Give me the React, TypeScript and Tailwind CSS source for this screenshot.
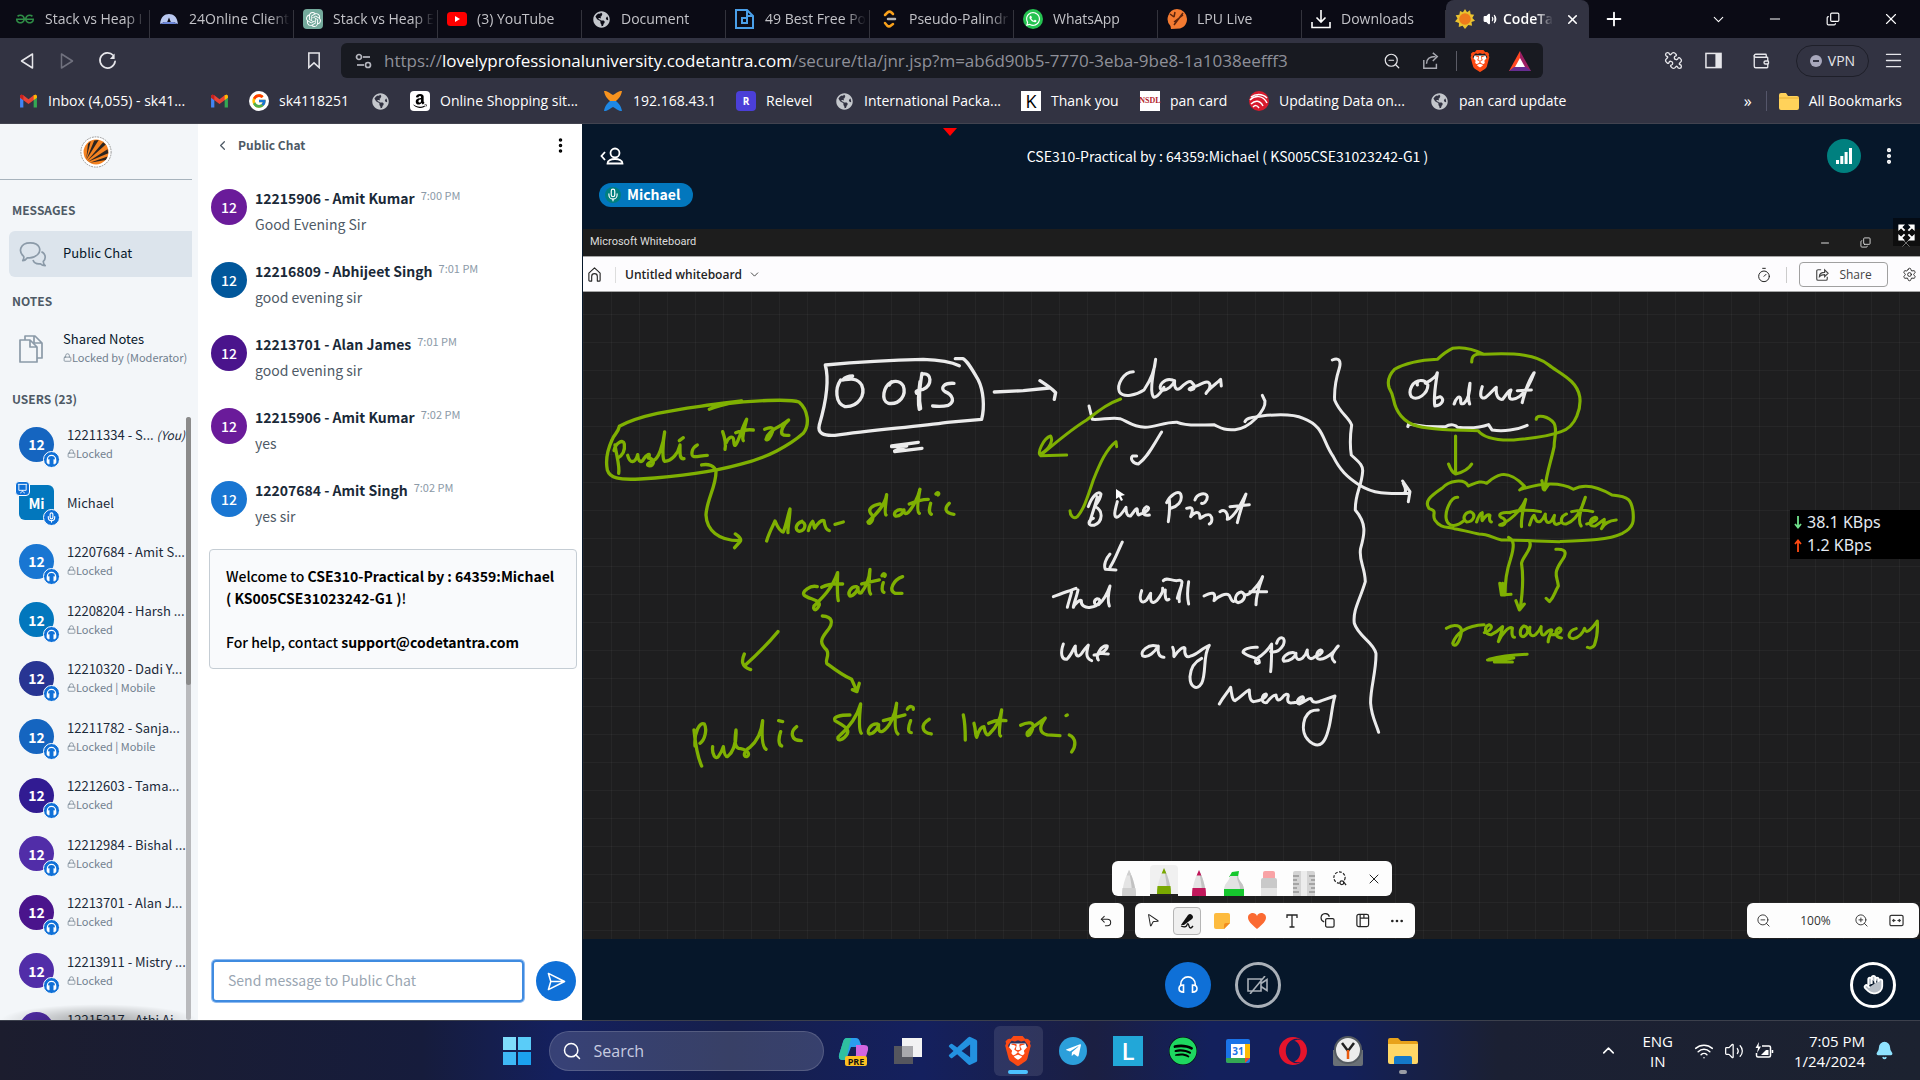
import React from "react";
import {
  ArrowDownToLine, BatteryCharging, Bell, Bookmark, ChevronDown, ChevronLeft, ChevronUp, Copy as Restore, Ellipsis,
  EllipsisVertical, Hand, Headphones, House, Lock, Menu, Mic, Minus, MousePointer2, PanelRight, PanelsTopLeft, Plus,
  Puzzle, Search, Settings, Timer, Type, Undo2, Volume2, Wallet, Wifi, X, ZoomIn, ZoomOut,
} from "lucide-react";
import { FcGoogle } from "react-icons/fc";
import { FaAmazon, FaGlobeAmericas, FaTelegramPlane, FaWhatsapp, FaSpotify } from "react-icons/fa";
import { SiBrave, SiGeeksforgeeks, SiOpenai, SiOpera } from "react-icons/si";
import { BiLogoVisualStudio } from "react-icons/bi";

/* ---------- small logos ---------- */

function Gmail() {
  return (
    <svg viewBox="0 0 20 16" className="h-[15px] w-[19px]">
      <path d="M1 3v11.5h3.5V6z" fill="#4285f4" />
      <path d="M19 3v11.5h-3.5V6z" fill="#34a853" />
      <path d="M1 2.6C1 .6 3.2.4 4.5 1.4L10 5.6l5.5-4.2C16.8.4 19 .6 19 2.6v1.3L10 10.6 1 3.9z" fill="#ea4335" />
      <path d="M15.5 1.4C16.8.4 19 .6 19 2.6v1.3l-3.5 2.6z" fill="#fbbc04" />
      <path d="M1 2.6v1.3l3.5 2.6V1.4C3.2.4 1 .6 1 2.6z" fill="#c5221f" />
    </svg>
  );
}

function BraveLogo({ size }: { size: number }) {
  return (
    <span className="relative inline-flex">
      <svg viewBox="0 0 24 24" width={size} height={size} className="absolute">
        <path d="M6 6h12l1.500 4-2.500 7-5 4-5-4-2.500-7z" fill="#fff" />
      </svg>
      <SiBrave size={size} color="#fb4a14" className="relative" />
    </span>
  );
}

function Globe() {
  return <FaGlobeAmericas size={17} className="text-[#c4c7cc]" />;
}

function YouTube() {
  return (
    <svg viewBox="0 0 20 14" className="h-3.5 w-5">
      <rect width="20" height="14" rx="3.5" fill="#f00" />
      <path d="M8 4v6l5-3z" fill="#fff" />
    </svg>
  );
}

function LpuBall({ size }: { size: number }) {
  return (
    <svg viewBox="0 0 36 36" width={size} height={size}>
      <circle cx="18" cy="18" r="17" fill="#fff" stroke="#8b8b8b" strokeWidth="1" strokeDasharray="2 1" />
      <circle cx="18" cy="18" r="14" fill="#f58220" />
      <g fill="#2b2420">
        <path d="M7 26 9 9l3-3z" />
        <path d="m7 27 9-22 5-.6z" />
        <path d="M8 28 26 7l3 2.500z" />
        <path d="m9 29 22-14 .8 4.500z" />
        <path d="m11 30 20-7-2 4z" />
      </g>
    </svg>
  );
}

function Sun() {
  return (
    <svg viewBox="0 0 24 24" className="size-5">
      <path d="M12 0l2.500 4L18 1.500l.8 4.700 4.200.6-2.200 4L24 14l-4.200 1.700.7 4.300-4.500-.7L12 24l-3-4-4.500 1.500.3-4.700L0 15l3-3.500L.8 7.500l4.400-.7.8-4.500L9.500 4z" fill="#e9c22f" />
      <circle cx="12" cy="12" r="7" fill="#ee7b1c" />
    </svg>
  );
}

/* ---------- browser chrome ---------- */

const tabs: { icon: React.ReactNode; title: string }[] = [
  { icon: <SiGeeksforgeeks size={18} color="#2f8d46" />, title: "Stack vs Heap I" },
  {
    icon: (
      <svg viewBox="0 0 20 12" className="w-[18px]">
        <path d="M0 11C1 3 5 0 10 0s9 3 10 11l-5-2h-3L10 4 8 9H5z" fill="#b9c8f0" />
        <path d="M0 11l5-2h10l5 2v1H0z" fill="#6c86d8" />
      </svg>
    ),
    title: "24Online Client",
  },
  {
    icon: (
      <span className="flex size-5 items-center justify-center rounded-sm bg-[#74aa9c]">
        <SiOpenai size={15} color="#fff" />
      </span>
    ),
    title: "Stack vs Heap E",
  },
  { icon: <YouTube />, title: "(3) YouTube" },
  { icon: <Globe />, title: "Document" },
  {
    icon: (
      <svg viewBox="0 0 20 20" className="size-5" fill="none" stroke="#4a9fe8" strokeWidth="2">
        <path d="M12 1H1v18h17V7z" />
        <path d="M12 1v6h6M7 9h5v5H7z" />
      </svg>
    ),
    title: "49 Best Free Po",
  },
  {
    icon: (
      <svg viewBox="0 0 20 20" className="size-5" fill="none" strokeWidth="2.500" strokeLinecap="round">
        <path d="M14 5l-1.500-1.500a3 3 0 0 0-4 0L6 6" stroke="#f9a11b" />
        <path d="M6 14l2 2.500a3 3 0 0 0 4 0l2-1.500" stroke="#f9a11b" />
        <path d="M9 10h7" stroke="#b5b5b5" />
      </svg>
    ),
    title: "Pseudo-Palindr",
  },
  {
    icon: (
      <span className="flex size-5 items-center justify-center rounded-full bg-[#25c351]">
        <FaWhatsapp size={16} color="#fff" />
      </span>
    ),
    title: "WhatsApp",
  },
  {
    icon: (
      <svg viewBox="0 0 20 20" className="size-5">
        <path d="M10 0a10 10 0 0 1 10 10c0 4-2 8-7 9.500L4 20l-.5-3A10 10 0 0 1 10 0z" fill="#f37a31" />
        <path d="M3 5l4 3M8 3l-1 5M7 16L16 4M7 13l9-7" stroke="#5c230c" strokeWidth="1.500" />
      </svg>
    ),
    title: "LPU Live",
  },
  {
    icon: (
      <svg viewBox="0 0 20 20" className="size-5" fill="none" stroke="#fff" strokeWidth="1.600">
        <path d="M10 1v12M5.500 8.500L10 13l4.500-4.500M1 13v5.500h18V13" />
      </svg>
    ),
    title: "Downloads",
  },
];

function TabStrip() {
  return (
    <div className="flex h-[38px] shrink-0 items-stretch bg-[#0b0b15] pl-1.5 text-sm text-[#c3c3c8]">
      {tabs.map((t) => (
        <button key={t.title} className="relative flex w-36 shrink items-center gap-2.5 overflow-hidden pr-1 pl-[9px]">
          <span className="flex w-5 shrink-0 justify-center">{t.icon}</span>
          <span className="min-w-0 flex-1 overflow-hidden text-left whitespace-nowrap [mask-image:linear-gradient(to_right,black_80%,transparent)]">
            {t.title}
          </span>
          <span className="absolute right-0 bottom-0 h-7 w-px bg-[#33333c]" />
        </button>
      ))}
      <div className="flex w-[143px] shrink-0 items-center rounded-t-lg bg-[#323342] pl-[9px] text-white">
        <Sun />
        <Volume2 size={14} fill="currentColor" className="ml-2" />
        <span className="ml-1.5 w-[50px] overflow-hidden font-semibold whitespace-nowrap [mask-image:linear-gradient(to_right,black_65%,transparent)]">
          CodeTa
        </span>
        <button aria-label="Close tab" className="ml-3"><X size={15} strokeWidth={2.5} /></button>
      </div>
      <button aria-label="New tab" className="ml-3.5 text-white"><Plus size={22} /></button>
      <div className="ml-auto flex items-center text-white">
        <button aria-label="Search tabs" className="flex w-14 justify-center"><ChevronDown size={17} strokeWidth={1.5} /></button>
        <button aria-label="Minimize" className="flex w-[58px] justify-center"><Minus size={16} strokeWidth={1.5} /></button>
        <button aria-label="Restore" className="flex w-[58px] justify-center"><Restore size={14} strokeWidth={2} className="-scale-x-100 rotate-180" /></button>
        <button aria-label="Close" className="flex w-[58px] justify-center"><X size={18} strokeWidth={1.5} /></button>
      </div>
    </div>
  );
}

function AddressRow() {
  return (
    <div className="flex h-[45px] shrink-0 items-center bg-[#323342] text-[#e6e6ea]">
      <div className="flex w-[341px] items-center px-[7px]">
        <button aria-label="Back" className="flex w-10 justify-center">
          <svg viewBox="0 0 14 18" className="h-[18px] w-3.5" fill="none" stroke="currentColor" strokeWidth="1.500" strokeLinejoin="round"><path d="M12.500 2v14L1.500 9z" /></svg>
        </button>
        <button aria-label="Forward" className="flex w-10 justify-center text-[#70717e]">
          <svg viewBox="0 0 14 18" className="h-[18px] w-3.5" fill="none" stroke="currentColor" strokeWidth="1.500" strokeLinejoin="round"><path d="M1.500 2v14l11-7z" /></svg>
        </button>
        <button aria-label="Reload" className="flex w-10 justify-center">
          <svg viewBox="0 0 20 20" className="size-[19px]" fill="none" stroke="currentColor" strokeWidth="1.800" strokeLinecap="round"><path d="M16 4.500A8 8 0 1 0 18 11" /><path d="M17.500 2.500v6h-5z" fill="currentColor" stroke="none" /></svg>
        </button>
        <button aria-label="Bookmark" className="ml-auto flex w-10 justify-center">
          <svg viewBox="0 0 14 18" className="h-[17px] w-3.5" fill="none" stroke="currentColor" strokeWidth="1.600"><path d="M1.500 1h11v15.500L7 11.500l-5.500 5z" /></svg>
        </button>
      </div>
      <div className="flex h-[35px] min-w-0 flex-1 items-center rounded-md bg-[#181a21] pr-1.5 pl-3.5">
        <svg viewBox="0 0 18 16" className="h-4 w-[18px]" fill="none" stroke="#b7b8c0" strokeWidth="1.700">
          <circle cx="4" cy="4" r="2.500" /><path d="M8 4h7" /><circle cx="13" cy="12" r="2.500" /><path d="M2 12h7" />
        </svg>
        <div role="textbox" aria-label="Address" className="ml-[11px] min-w-0 flex-1 truncate text-[17px] text-[#8f9099]">
          https://<span className="text-white">lovelyprofessionaluniversity.codetantra.com</span>/secure/tla/jnr.jsp?m=ab6d90b5-7770-3eba-9be8-1a1038eefff3
        </div>
        <button aria-label="Zoom level" className="flex w-[39px] justify-center"><ZoomOut size={18} strokeWidth={1.6} /></button>
        <button aria-label="Share page" className="flex w-[39px] justify-center">
          <svg viewBox="0 0 20 20" className="size-[18px]" fill="none" stroke="#a9aab2" strokeWidth="1.600"><path d="M2 9v9h14v-5M5 13c0-6 4-8 10-8M12 1l5 4-5 5" /></svg>
        </button>
        <span className="ml-1.5 h-5 w-px bg-[#5b5c66]" />
        <button aria-label="Brave Shields" className="flex w-[46px] justify-center"><BraveLogo size={22} /></button>
        <button aria-label="Brave Rewards" className="flex w-[34px] justify-center">
          <svg viewBox="0 0 22 20" className="h-5 w-[22px]"><path d="M11 0L0 20h5l6-11z" fill="#ff4724" /><path d="M11 0l11 20h-5l-6-11z" fill="#9e1f63" /><path d="M0 20h22l-5-4H5z" fill="#662d91" /><path d="M11 7l5 9H6z" fill="#fff" /></svg>
        </button>
      </div>
      <div className="flex w-[377px] items-center justify-end pr-[7px]">
        <button aria-label="Extensions" className="flex w-10 justify-center"><Puzzle size={19} strokeWidth={1.7} className="-scale-x-100" /></button>
        <button aria-label="Sidebar" className="flex w-10 justify-center">
          <svg viewBox="0 0 18 18" className="size-[17px]"><rect x="1" y="1.500" width="16" height="15" fill="none" stroke="#e6e6ea" strokeWidth="1.600" /><path d="M11 1.500h6v15h-6z" fill="#e6e6ea" /></svg>
        </button>
        <button aria-label="Wallet" className="ml-2 flex w-10 justify-center"><Wallet size={18} strokeWidth={1.8} /></button>
        <button className="ml-[15px] flex h-8 w-[73px] items-center justify-center gap-1 rounded-full border border-[#1e1f29] text-sm">
          <span className="mr-0.5 flex size-3 items-center justify-center rounded-full bg-[#a8a8bc]"><span className="h-0.5 w-1.5 bg-[#323342]" /></span>VPN
        </button>
        <button aria-label="Menu" className="ml-1 flex w-10 justify-center"><Menu size={21} strokeWidth={1.5} /></button>
      </div>
    </div>
  );
}

const bookmarks: { icon: React.ReactNode; label: string; width: string }[] = [
  { icon: <Gmail />, label: "Inbox (4,055) - sk41...", width: "w-[191px]" },
  { icon: <Gmail />, label: "", width: "w-10" },
  { icon: <span className="rounded-full bg-white p-0.5"><FcGoogle size={16} /></span>, label: "sk4118251", width: "w-[121px]" },
  { icon: <Globe />, label: "", width: "w-10" },
  { icon: <span className="rounded-sm bg-white p-0.5 text-black"><FaAmazon size={16} /></span>, label: "Online Shopping sit...", width: "w-[193px]" },
  {
    icon: (
      <svg viewBox="0 0 20 20" className="size-5"><path d="M1 0c4 0 5 2 9 4 4-2 5-4 9-4-1 6-4 8-6 10H7C5 8 2 6 1 0z" fill="#f7931e" /><path d="M7 10h6c2 2 5 4 6 10-4 0-5-2-9-4-4 2-5 4-9 4 1-6 4-8 6-10z" fill="#1e88e5" /></svg>
    ),
    label: "192.168.43.1",
    width: "w-[133px]",
  },
  { icon: <span className="flex size-5 items-center justify-center rounded bg-[#4b3fd8] text-[10px] font-bold text-white">R</span>, label: "Relevel", width: "w-[98px]" },
  { icon: <Globe />, label: "International Packa...", width: "w-[187px]" },
  { icon: <span className="flex size-5 items-center justify-center bg-white text-lg leading-none text-black">K</span>, label: "Thank you", width: "w-[119px]" },
  { icon: <span className="flex size-5 items-center justify-center bg-white font-['Liberation_Serif'] text-[8px] font-bold text-[#b3262e]">NSDL</span>, label: "pan card", width: "w-[109px]" },
  {
    icon: (
      <svg viewBox="0 0 20 20" className="size-5" fill="none"><circle cx="10" cy="10" r="10" fill="#d71b2d" /><path d="M1 9c5-5 13-5 17 3M2 13c4-4 9-4 12 2M4 16c2-2 4-2 6 1M2 6c4-3 11-4 16 1" stroke="#fff" strokeWidth="1.500" /></svg>
    ),
    label: "Updating Data on...",
    width: "w-[180px]",
  },
  { icon: <Globe />, label: "pan card update", width: "w-[140px]" },
];

function BookmarksBar() {
  return (
    <div className="flex h-[41px] shrink-0 items-center border-b border-[#42434f] bg-[#323342] pb-1 pl-[18px] text-sm text-white">
      {bookmarks.map((b, i) => (
        <a key={i} href="#" aria-label={b.label || "Bookmark"} className={`flex items-center gap-2.5 whitespace-nowrap ${b.width}`}>
          <span className="flex w-5 shrink-0 justify-center">{b.icon}</span>
          {b.label}
        </a>
      ))}
      <button className="ml-auto px-3.5 text-base">»</button>
      <span className="h-5 w-px bg-[#55566a]" />
      <a href="#" className="ml-3 flex items-center gap-2.5 pr-[18px]">
        <svg viewBox="0 0 20 17" className="h-[17px] w-5"><path d="M0 2a2 2 0 0 1 2-2h5l2 3h9a2 2 0 0 1 2 2v10a2 2 0 0 1-2 2H2a2 2 0 0 1-2-2z" fill="#ffd25a" /><path d="M0 5h20" stroke="#e8b030" /></svg>
        All Bookmarks
      </a>
    </div>
  );
}

/* ---------- left panel ---------- */

type User = { name: string; color: string; status?: string; you?: boolean; presenter?: boolean };

const users: User[] = [
  { name: "12211334 - S...", color: "bg-[#1565c0]", status: "Locked", you: true },
  { name: "Michael", color: "bg-[#0277bd]", presenter: true },
  { name: "12207684 - Amit S...", color: "bg-[#1976d2]", status: "Locked" },
  { name: "12208204 - Harsh ...", color: "bg-[#0277bd]", status: "Locked" },
  { name: "12210320 - Dadi Y...", color: "bg-[#283593]", status: "Locked | Mobile" },
  { name: "12211782 - Sanja...", color: "bg-[#1565c0]", status: "Locked | Mobile" },
  { name: "12212603 - Tama...", color: "bg-[#311b92]", status: "Locked" },
  { name: "12212984 - Bishal ...", color: "bg-[#512da8]", status: "Locked" },
  { name: "12213701 - Alan J...", color: "bg-[#4a148c]", status: "Locked" },
  { name: "12213911 - Mistry ...", color: "bg-[#512da8]", status: "Locked" },
  { name: "12215217 - Athi Ai...", color: "bg-[#512da8]", status: "Locked" },
];

function BadgePhones() {
  return (
    <svg viewBox="0 0 12 12" className="size-[11px]" fill="none" stroke="#fff" strokeWidth="1.400">
      <path d="M1.500 8V6a4.500 4.500 0 0 1 9 0v2" />
      <path d="M3.500 6v5C1.500 11 1 9.500 1 8.500S1.500 6 3.500 6zM8.500 6v5c2 0 2.500-1.500 2.500-2.500S10.500 6 8.500 6z" fill="#fff" strokeWidth=".6" />
    </svg>
  );
}

function UserRow({ user }: { user: User }) {
  return (
    <li className="flex shrink-0 items-center odd:h-[58px] even:h-[59px]">
      <div className={`relative ml-[19px] flex size-[35px] shrink-0 items-center justify-center text-sm font-bold text-white ${user.color} ${user.presenter ? "rounded-md" : "rounded-full"}`}>
        {user.presenter ? "Mi" : "12"}
        {user.presenter && (
          <span className="absolute -top-1 -left-1 flex size-[15px] items-center justify-center rounded border border-white bg-[#0f70d7]">
            <svg viewBox="0 0 12 12" className="size-[11px]" fill="none" stroke="#fff"><path d="M1 1.500h10M2 2v6h8V2M6 8v1M3.500 11L6 9l2.500 2" /></svg>
          </span>
        )}
        <span className="absolute -right-1.5 -bottom-1.5 flex size-[17px] items-center justify-center rounded-full border border-white bg-[#0f70d7]">
          {user.presenter ? <Mic size={11} strokeWidth={2.5} /> : <BadgePhones />}
        </span>
      </div>
      <div className="ml-[13px] min-w-0 whitespace-nowrap">
        <div className="text-[13px] leading-[19px] text-[#1b2a3a]">
          {user.name} {user.you && <i className="text-[12px]">(You)</i>}
        </div>
        {user.status && (
          <div className="flex items-center text-[11px] leading-[19px] text-[#71808f]">
            <Lock size={9} strokeWidth={2} />
            {user.status}
          </div>
        )}
      </div>
    </li>
  );
}

function Sidebar() {
  return (
    <aside className="flex w-[198px] shrink-0 flex-col overflow-hidden bg-[#f3f6f9]">
      <div className="mr-1.5 flex h-14 shrink-0 items-center justify-center border-b border-[#a7b3bd]"><LpuBall size={32} /></div>
      <h2 className="mt-5 ml-3 text-[12px] leading-5 font-bold text-[#4e5a66]">MESSAGES</h2>
      <button className="mt-[11px] mr-1.5 ml-[9px] flex h-[46px] shrink-0 items-center rounded-l-md bg-[#dce4ec] text-left text-[13px] text-[#06172a]">
        <svg viewBox="0 0 30 28" className="ml-2.5 h-[27px] w-7" fill="none" stroke="#8b9aa8" strokeWidth="1.800" strokeLinejoin="round">
          <path d="M5 16C-1 11 1 1.500 12 1.500S24 10 20 14s-8 4-11 3.500C8 19 6 20.500 4 20.500c1-1.500 1.500-3 1-4.500z" />
          <path d="M24 11c5 2 5 8 2 10.500 0 2 1 3.500 2 4.500-2.500 0-4-1-5-2-4 .5-7-1-8-4" />
        </svg>
        <span className="ml-4 pb-0.5">Public Chat</span>
      </button>
      <h2 className="mt-3.5 ml-3 text-[12px] leading-5 font-bold text-[#4e5a66]">NOTES</h2>
      <button className="mt-[19px] flex shrink-0 items-center text-left">
        <svg viewBox="0 0 24 28" className="ml-[19px] h-7 w-6" fill="none" stroke="#8b9aa8" strokeWidth="1.700" strokeLinejoin="round">
          <path d="M6 5V1h10l7 7v15h-5M15 1v7h8" />
          <path d="M1 5h10l7 7v15H1zM11 5v7h7" />
        </svg>
        <span className="ml-5 text-[#06172a]">
          <span className="block text-[13px] leading-[18px]">Shared Notes</span>
          <span className="flex items-center text-[11px] leading-[19px] whitespace-nowrap text-[#71808f]"><Lock size={9} />Locked by (Moderator)</span>
        </span>
      </button>
      <h2 className="mt-[22px] ml-3 text-[12px] leading-5 font-bold text-[#4e5a66]">USERS (23)</h2>
      <div className="relative mt-1.5 min-h-0 flex-1 overflow-hidden">
        <ul className="flex flex-col">{users.map((u) => <UserRow key={u.name} user={u} />)}</ul>
        <div className="absolute inset-x-0 bottom-0 h-4 bg-[radial-gradient(ellipse_at_bottom,rgba(0,0,0,0.35),transparent_70%)]" />
        <div className="absolute top-0.5 right-[7px] bottom-0 w-[5px] rounded bg-[#b9babd]">
          <div className="h-[268px] rounded bg-[#8b8b8b]" />
        </div>
      </div>
    </aside>
  );
}

/* ---------- chat ---------- */

const messages = [
  { name: "12215906 - Amit Kumar", time: "7:00 PM", text: "Good Evening Sir", color: "bg-[#6a1b9a]" },
  { name: "12216809 - Abhijeet Singh", time: "7:01 PM", text: "good evening sir", color: "bg-[#01579b]" },
  { name: "12213701 - Alan James", time: "7:01 PM", text: "good evening sir", color: "bg-[#4a148c]" },
  { name: "12215906 - Amit Kumar", time: "7:02 PM", text: "yes", color: "bg-[#6a1b9a]" },
  { name: "12207684 - Amit Singh", time: "7:02 PM", text: "yes sir", color: "bg-[#1976d2]" },
];

function Chat() {
  return (
    <section className="flex w-96 shrink-0 flex-col bg-white">
      <header className="flex h-[42px] items-center pr-3 pl-[17px] text-[#4e5a66]">
        <button className="flex items-center gap-2 text-[12px] font-bold"><ChevronLeft size={15} />Public Chat</button>
        <button aria-label="Chat options" className="ml-auto text-black"><EllipsisVertical size={19} strokeWidth={2.5} /></button>
      </header>
      <ul className="mt-[17px]">
        {messages.map((m, i) => (
          <li key={i} className="flex h-[73px] items-start pl-[13px]">
            <span className={`mt-1.5 flex size-9 shrink-0 items-center justify-center rounded-full text-sm font-medium text-white ${m.color}`}>12</span>
            <div className="ml-2">
              <div className="flex text-sm leading-[30px] font-bold text-[#1a2938]">
                {m.name}
                <time className="ml-1.5 text-[11px] leading-[25px] font-normal text-[#8b9aa8]">{m.time}</time>
              </div>
              <p className="text-sm leading-[22px] text-[#4e5a66]">{m.text}</p>
            </div>
          </li>
        ))}
      </ul>
      <div className="mt-px mr-[5px] ml-[11px] rounded-sm border border-[#c5cdd4] bg-[#f9fafc] py-[15px] pl-4 text-sm leading-[22px] font-medium text-black">
        <p>Welcome to <b>CSE310-Practical by : 64359:Michael<br />( KS005CSE31023242-G1 )</b>!</p>
        <p className="mt-[22px]">For help, contact <b>support@codetantra.com</b></p>
      </div>
      <form className="mt-auto mb-[18px] flex items-center gap-3 pr-1.5 pl-3.5" onSubmit={(e) => e.preventDefault()}>
        <label htmlFor="message" className="sr-only">Send message to Public Chat</label>
        <input id="message" autoFocus placeholder="Send message to Public Chat" className="h-[42px] min-w-0 flex-1 rounded-sm border-2 border-[#3f8be0] px-3.5 pb-0.5 text-sm shadow-[0_0_0_1px_#8fbaf0] outline-none placeholder:text-[#9aa6b2]" />
        <button aria-label="Send message" className="flex size-10 items-center justify-center rounded-full bg-[#0f70d7] text-white">
          <svg viewBox="0 0 20 20" className="size-[19px]" fill="none" stroke="currentColor" strokeWidth="1.600" strokeLinejoin="round"><path d="M1.500 1.500l17 8.500-17 8.500L4 10zM4 10h14" /></svg>
        </button>
      </form>
    </section>
  );
}

/* ---------- whiteboard ---------- */

const greenLeft = [
  "M358 238C390 224 420 220 455 213C430 216 380 221 330 229C250 240 150 255 88 289C84 310 72 312 66 330C50 365 48 400 52 420C60 445 85 450 150 447C260 440 370 425 450 403C530 385 600 345 640 310C660 285 655 240 627 216C600 206 480 212 400 222",
  "M75 345C80 380 90 410 86 430M72 362C76 340 100 325 103 342C106 365 95 378 82 385",
  "M113 376C120 402 136 400 143 374C144 392 150 398 158 392C170 372 185 366 175 384C195 385 195 410 176 407C168 405 175 398 190 392C205 388 220 345 224 306C218 340 216 392 224 394C245 392 264 372 270 345C270 370 268 388 282 386",
  "M268 332l12-9M322 345C306 352 300 378 312 380C325 381 335 376 352 376",
  "M398 305C405 325 408 345 405 358M408 340C415 320 430 315 431 330C432 345 434 352 440 340C450 320 458 290 470 268C462 300 455 325 460 332M437 308C455 300 470 298 490 300",
  "M524 298C542 290 552 292 548 304C542 322 532 334 528 328C530 308 560 292 576 284C584 278 592 274 596 270C578 286 572 304 576 312C582 318 590 316 597 316",
  "M335 405C355 400 375 408 378 425C378 470 350 510 348 555C350 600 385 632 448 632M436 612C448 620 456 628 450 635L434 653",
  "M530 633C538 605 552 582 555 573C560 585 570 605 580 606C590 580 595 550 600 537C600 560 592 600 594 608",
  "M636 574C618 580 612 600 628 604C648 602 650 578 634 575M655 602C658 590 662 580 668 574C672 582 672 592 674 594C682 582 695 568 702 572C704 588 708 600 718 602M735 583l25-7",
  "M870 522C850 526 832 535 842 550C858 565 838 590 834 576C850 560 885 530 890 494C888 520 882 550 888 555M935 540C920 536 908 552 916 558C930 560 940 548 942 540C942 552 948 554 956 546C970 530 985 500 990 478C984 510 980 545 988 550M958 522C980 512 1000 508 1015 508M1022 520C1018 535 1015 548 1024 553M1038 492c5-8 12-2 6 3M1078 520C1062 535 1065 550 1092 553",
  "M682 770C660 764 636 785 642 795C655 808 690 808 688 825C680 845 668 842 672 828C690 810 725 780 743 728C742 760 742 800 745 812M695 772C715 762 735 760 758 762M800 770C782 768 772 790 780 798C792 798 804 780 804 772C804 785 806 792 814 788C828 770 838 745 840 718C838 750 834 785 842 792M815 762L868 750M880 758C875 770 875 785 882 787M876 737c5-10 14-4 8 2M938 740C910 750 895 780 915 790L936 790",
  "M697 858C725 860 735 875 710 905C690 930 690 940 710 960C720 975 705 990 710 1000C730 1015 755 1035 785 1048L800 1082M808 1060l-7 25-14-6",
  "M564 905C535 940 500 975 463 1008M463 972C455 990 452 1010 482 1019",
  "M312 1200C316 1240 322 1280 335 1308M315 1248C312 1205 330 1175 343 1182C352 1198 345 1230 330 1240M368 1250C365 1275 378 1290 385 1280C396 1265 400 1250 400 1250C402 1270 406 1280 412 1280C428 1268 440 1240 438 1200C432 1240 436 1256 452 1256C474 1260 482 1275 470 1280C458 1280 462 1262 480 1252C505 1230 515 1200 518 1172C515 1210 515 1250 528 1258M572 1205C565 1225 565 1245 575 1248M566 1172l12 3M620 1190C600 1205 602 1232 634 1232",
  "M780 1155C750 1155 728 1160 735 1172C755 1185 780 1195 772 1212C760 1232 740 1235 744 1222C775 1195 800 1165 812 1122C808 1160 806 1200 814 1210M862 1182C842 1180 828 1205 838 1212C852 1212 864 1195 866 1184C864 1200 868 1208 878 1204C900 1190 915 1155 920 1120C915 1160 912 1205 924 1212M880 1172L945 1155M962 1172C955 1190 952 1208 964 1208M952 1138c6-12 20-10 18 0M1018 1168C990 1185 995 1208 1024 1212",
  "M1120 1155C1126 1180 1126 1210 1126 1230M1152 1180C1158 1200 1156 1220 1160 1222C1166 1200 1175 1190 1182 1190C1185 1210 1192 1222 1200 1210C1220 1190 1232 1165 1235 1140C1230 1180 1225 1215 1232 1218M1196 1180C1215 1170 1235 1170 1248 1172",
  "M1292 1186C1315 1174 1336 1176 1328 1196C1320 1220 1308 1222 1312 1208C1326 1190 1352 1176 1366 1164C1346 1192 1348 1208 1372 1215L1410 1217M1428 1157l4-2M1438 1215C1460 1225 1458 1250 1445 1266",
];

const whiteLeft = [
  "M706 105C718 150 710 210 688 285C682 310 700 318 735 316C850 300 980 290 1072 277L1175 268C1185 230 1180 180 1165 150C1145 115 1130 90 1118 86L1096 86M706 105C800 96 900 90 1000 88C1055 90 1085 96 1108 107",
  "M752 150C735 175 735 220 765 230C805 232 828 195 815 165C800 140 775 148 758 150C765 142 775 138 788 138",
  "M905 155C880 170 872 210 895 220C930 225 950 195 940 168C930 150 905 150 898 165",
  "M990 155C985 190 984 220 988 238M996 130C990 170 985 200 992 236M1000 132C1025 128 1028 165 1000 178C985 182 975 180 980 190",
  "M1092 160C1060 158 1050 175 1065 185C1090 195 1095 215 1075 226C1060 230 1045 230 1028 228",
  "M905 348L985 337M914 365L996 355M905 350L950 348L914 363",
  "M1213 186L1300 182L1378 174M1350 152C1370 165 1390 180 1397 188L1393 208",
];

const whiteMid = [
  "M340 125C310 125 290 165 298 185C310 205 350 195 372 180C392 150 405 120 407 88C398 140 388 190 402 202C410 203 425 185 432 172M458 150C432 142 412 170 424 180C442 184 460 165 464 152C462 175 470 182 480 175C495 160 510 150 514 156C525 165 528 178 512 180C500 178 512 172 530 168C548 160 560 152 566 158C575 165 568 180 558 190C562 180 590 160 602 148L604 168",
  "M207 228L217 268C245 270 270 262 300 266C320 272 335 290 375 292C410 290 435 276 472 277C500 290 545 284 582 284C600 292 610 302 645 299C690 295 738 240 735 213L727 196",
  "M675 275C680 262 700 262 725 258C780 252 820 252 850 265C915 290 905 330 940 380C960 420 980 440 1018 465C1060 492 1100 492 1165 490M1150 460C1160 480 1158 490 1150 490M1148 453L1170 485L1165 515",
  "M425 306C400 345 385 380 355 402C340 402 328 385 338 378L350 378",
  "M232 500C225 530 215 555 210 575M205 530C215 500 235 480 243 492C240 515 220 530 225 530C250 540 250 575 222 586C200 588 205 570 220 565",
  "M292 515C285 540 280 560 290 562C300 560 310 545 318 532C318 550 322 560 332 558C345 540 352 530 352 540C352 555 355 558 362 552C385 545 392 532 380 530C370 535 360 560 388 555",
  "M448 508C450 530 448 555 445 575M440 518C450 495 475 480 482 492C490 515 470 530 452 535M500 535C520 528 520 540 512 560C525 545 540 540 540 565C550 560 560 550 570 555C580 565 575 580 568 582M525 510C530 490 560 485 562 500C562 515 550 522 545 520M600 545C615 535 625 550 622 568C635 565 655 540 678 492C665 530 655 565 652 578M630 530L688 524",
  "M307 636C295 660 285 690 270 712M270 672C258 685 250 705 256 718L288 720",
  "M100 800C125 790 150 782 168 775M155 785C150 805 145 820 142 832M174 780C170 800 160 825 160 832C165 820 180 808 184 812C182 826 195 835 212 832C240 828 246 806 232 806C218 812 222 828 236 824C250 812 262 790 270 768C265 790 262 812 268 828",
  "M365 782C355 810 365 825 380 810L392 790C390 815 395 825 410 812C425 795 430 785 428 775M436 780C434 800 437 815 447 808M430 752C440 742 448 750 470 752C500 745 480 770 472 805M485 765C480 785 475 800 478 815M506 755C502 780 502 805 506 822",
  "M552 798C575 785 590 785 582 812C595 798 618 788 628 796C634 808 636 816 642 814M664 786C646 790 640 812 654 818C672 816 680 796 668 788C676 798 686 796 696 784C710 770 722 755 728 740C715 775 708 805 708 824M690 785L740 785",
  "M130 942C120 970 125 990 140 988C155 975 160 955 166 948C165 975 172 988 185 970C195 955 205 945 205 945C200 965 195 985 215 992M222 975C240 975 262 960 262 948C245 945 225 975 235 990M240 970L265 972",
  "M410 948C385 940 360 965 368 978C385 985 405 965 415 948C412 970 418 982 432 982M458 952C465 965 460 980 462 980C475 960 490 948 495 955C492 975 500 985 512 978C530 975 545 955 568 946C548 975 560 1030 545 1060C530 1085 510 1070 510 1040C512 1010 525 995 545 985",
  "M712 952C690 950 665 960 670 968C690 985 720 980 718 998C710 1005 700 995 712 985C735 970 750 950 755 942C755 970 755 1000 752 1025M770 940C778 915 800 920 790 945C780 962 765 968 752 965M822 968C802 966 782 985 792 994C810 994 826 982 828 970C826 986 834 994 848 984C858 975 862 960 862 960C860 985 872 992 885 980M890 978C905 974 912 962 902 960C888 966 884 988 900 988C920 986 930 975 940 966C950 955 950 950 955 948C935 970 930 985 944 996",
  "M598 1122C610 1100 625 1085 632 1072C635 1095 638 1112 645 1112C665 1100 675 1085 688 1080C688 1100 690 1115 702 1115C725 1112 745 1098 738 1092C725 1095 720 1120 740 1118C750 1105 760 1095 768 1095C770 1110 775 1115 785 1105C795 1090 805 1090 805 1098C800 1115 805 1122 820 1118C838 1118 858 1108 848 1100C834 1102 826 1120 838 1122C855 1116 868 1102 874 1106C876 1118 890 1120 905 1112L945 1098C935 1130 935 1165 925 1200C915 1240 900 1252 880 1242C850 1225 845 1195 855 1165C865 1145 875 1140 895 1140",
  "M937 90C955 82 965 90 958 115C950 140 942 170 944 210C960 250 985 260 995 285C990 320 990 350 994 375C1015 395 1030 405 1028 425C1025 470 1005 490 1006 540C1040 580 1035 610 1022 655C1015 690 1035 710 1036 755C1020 810 998 840 1003 880C1015 920 1060 935 1068 970C1070 1020 1050 1080 1052 1120C1055 1160 1068 1180 1076 1207",
];

const greenMid = [
  "M302 207C265 220 240 240 200 270C150 300 100 345 62 375M140 375L62 377C50 370 70 325 92 318C100 330 90 355 65 370",
  "M290 350L288 335C260 355 240 400 220 450C200 510 190 540 172 560C160 570 150 555 150 542",
];

const whiteRight = [
  "M150 152C120 148 108 185 118 200C135 215 165 190 165 165C155 145 130 150 135 165M158 160C175 150 190 140 192 128C188 160 180 200 185 228C205 225 215 208 200 200L185 206M240 222C245 205 255 195 258 205C260 215 255 225 268 220C285 205 285 175 285 160C280 185 280 210 284 222M320 170C312 195 315 210 330 202C345 190 355 175 360 172C358 195 365 210 378 208C388 195 394 182 402 180C396 195 394 208 406 208C435 205 455 165 468 128C448 160 438 200 434 218M420 182L460 180",
  "M108 290L110 282C150 290 180 292 215 290C230 280 245 285 250 292C280 295 310 295 338 284L348 300C380 305 420 300 448 286",
];

const greenRight = [
  "M290 96C290 75 300 70 325 73C290 55 260 50 235 55C215 65 205 75 192 88C150 90 100 100 70 118C50 140 50 160 55 175C70 200 65 215 75 235C90 270 120 290 165 294C210 302 260 300 308 302C325 325 360 332 410 330C470 325 520 315 545 305C590 290 602 230 598 200C590 150 540 130 510 105C475 75 420 68 325 73",
  "M244 318L244 432M224 402C230 420 240 430 244 432C260 428 280 420 290 402",
  "M474 268C475 250 510 260 525 280C535 300 525 320 525 350C515 400 505 420 498 480M490 452C495 465 490 480 498 480L508 465",
  "M427 480L440 468C420 445 395 430 375 434C350 440 340 455 333 460C315 450 300 460 280 468C270 445 225 450 205 475C170 500 155 515 168 535C195 545 175 550 185 570C200 595 220 590 240 596C265 600 280 605 310 612C340 612 350 625 375 630C430 628 460 635 540 635C620 632 680 630 720 610C755 590 752 570 750 545C745 510 740 500 690 495C650 470 610 460 580 478C550 460 500 455 430 478",
  "M250 502C230 500 212 545 218 570C226 595 250 588 268 572M286 545C268 548 262 568 276 576C294 576 304 554 288 546M304 576C308 562 314 550 320 548C320 560 318 568 320 572C328 558 338 550 342 556C340 566 340 574 346 576M400 548C378 545 362 552 374 562C394 570 386 590 370 585C395 575 430 545 444 508C436 540 430 565 432 590M395 548C430 538 460 540 486 545M455 585C460 570 462 560 468 556C472 566 474 580 486 574C496 566 498 556 500 552C498 572 506 586 518 572L526 556C520 580 528 588 540 580M560 552C542 560 540 584 560 582C590 570 605 535 614 502C600 540 592 575 602 588M575 545C600 538 620 540 635 545M618 582C640 578 655 564 642 562C626 566 620 592 642 588C656 580 664 570 668 568C668 580 664 590 660 596C666 584 680 572 702 570",
  "M395 622C412 630 412 650 400 690C390 720 385 750 385 795M370 760L375 795L402 793M378 760L380 790",
  "M455 635C465 655 435 680 432 700C438 740 435 790 428 838M416 812L426 840L440 822",
  "M530 658C565 655 560 675 545 695C520 735 535 740 537 768C525 790 525 800 512 815L502 805",
  "M218 895C240 880 265 885 260 910C255 940 240 955 236 940C245 910 275 886 325 884M326 908C345 902 352 888 340 884C324 890 326 916 346 914C362 906 372 896 378 890C376 906 370 920 366 935C375 912 396 888 406 894C404 908 404 922 412 922M440 888C425 895 425 922 438 920C456 908 452 890 438 888M456 892C452 912 460 924 472 914C482 904 486 896 488 890C486 908 490 922 500 912C512 896 524 896 516 908C510 922 508 930 508 936M520 914C540 914 552 898 540 894C526 900 526 922 546 924M588 896C566 902 560 926 580 926C600 922 608 906 612 895C615 915 630 900 648 873C650 900 645 930 640 945C635 955 625 955 620 952",
  "M340 988C375 978 410 975 448 973M335 990C370 988 400 982 410 984C380 988 360 992 355 996L406 996",
];

const GREEN = "#7fb002";
const WHITE = "#ebebeb";

function Ink({ d, color, transform, width = 9 }: { d: string[]; color: string; transform: string; width?: number }) {
  return (
    <g transform={transform} stroke={color} strokeWidth={width}>
      {d.map((p, i) => <path key={i} d={p} />)}
    </g>
  );
}

function Drawing() {
  return (
    <svg viewBox="583 292 1337 647" className="block w-full" fill="none" strokeLinecap="round" strokeLinejoin="round" role="img" aria-label="Handwritten notes on OOPS, class and object">
      <Ink d={whiteLeft} color={WHITE} transform="translate(590 330) scale(.3333)" width={10} />
      <Ink d={whiteMid} color={WHITE} transform="translate(1020 330) scale(.3333)" />
      <Ink d={whiteRight} color={WHITE} transform="translate(1370 330) scale(.3507 .3333)" />
      <Ink d={greenLeft} color={GREEN} transform="translate(590 330) scale(.3333)" width={10} />
      <Ink d={greenMid} color={GREEN} transform="translate(1020 330) scale(.3333)" />
      <Ink d={greenRight} color={GREEN} transform="translate(1370 330) scale(.3507 .3333)" />
      <path d="M1116 489v10l3-2 2 4 2-1-2-4 4-1z" fill="#fff" />
    </svg>
  );
}

function Pen({ kind, color }: { kind: "pen" | "marker" | "eraser" | "ruler"; color: string }) {
  if (kind === "ruler")
    return (
      <svg viewBox="0 0 22 25" className="h-[25px] w-[22px]"><rect width="22" height="28" rx="2" fill="#d4d4d4" /><path d="M8 0h6v25H8z" fill="#ececec" /><path d="M0 5h6M0 9h4M0 13h6M0 17h4M0 21h6M22 5h-6M22 9h-4M22 13h-6M22 17h-4M22 21h-6" stroke="#777" /></svg>
    );
  if (kind === "eraser")
    return (
      <svg viewBox="0 0 18 25" className="h-[25px] w-[18px]"><rect x="3" width="12" height="9" rx="2" fill={color} /><path d="M1 9q0-2 2-2h12q2 0 2 2v16H1z" fill="#c9c9c9" /><path d="M1 17h16v8H1z" fill="#e4e4e4" /></svg>
    );
  if (kind === "marker")
    return (
      <svg viewBox="0 0 20 25" className="h-[25px] w-5"><path d="M5 6l3-5 7-1-1 6z" fill={color} /><path d="M6 5h8c1 6 5 6 6 13H0C1 11 5 11 6 5z" fill="#e2e2e2" /><path d="M13 5h1c1 6 5 6 6 13h-4c0-5-3-8-3-13z" fill="#c4c4c4" /><path d="M0 18h20v7H0z" fill={color} /></svg>
    );
  return (
    <svg viewBox="0 0 16 26" className="h-[26px] w-4">
      <path d="M8 0c3 7 6 12 7 26H1C2 12 5 7 8 0z" fill="#e4e4e4" />
      <path d="M8 0c3 7 6 12 7 26h-4C11 14 9 7 8 0z" fill="#c2c2c2" />
      <path d="M8 0l2.400 5.500H5.600zM1.500 18h13q.5 4 .5 8H1q0-4 .5-8z" fill={color} />
    </svg>
  );
}

const toolBtn = "flex h-full w-[35px] items-center justify-center";

function BoardToolbars() {
  return (
    <>
      <div className="absolute inset-x-0 bottom-px flex flex-col items-center gap-[7px] text-[#242424]">
        <div className="flex h-[35px] items-end overflow-hidden rounded-md bg-[#fdfdfd]">
          <button aria-label="Pen" className="flex w-[35px] justify-center"><Pen kind="pen" color="#cfcfcf" /></button>
          <button aria-label="Green pen" className="flex w-[35px] justify-center">
            <span className="flex h-[31px] w-7 items-end justify-center rounded-t border-b-2 border-[#222] bg-[#f0f0f0]"><Pen kind="pen" color="#79a800" /></span>
          </button>
          <button aria-label="Red pen" className="flex w-[35px] justify-center"><Pen kind="pen" color="#c2185b" /></button>
          <button aria-label="Highlighter" className="flex w-[35px] justify-center"><Pen kind="marker" color="#16c72e" /></button>
          <button aria-label="Eraser" className="flex w-[35px] justify-center"><Pen kind="eraser" color="#f9a3a6" /></button>
          <button aria-label="Ruler" className="flex w-[35px] justify-center"><Pen kind="ruler" color="#ddd" /></button>
          <button aria-label="Lasso select" className={toolBtn}>
            <svg viewBox="0 0 16 16" className="size-[15px]" fill="none" stroke="currentColor" strokeWidth="1.300"><circle cx="8" cy="7" r="6" strokeDasharray="3 1.500" /><circle cx="10.500" cy="12.500" r="2" fill="#fff" /><path d="M12 11l3 4" /></svg>
          </button>
          <button aria-label="Close pens" className={toolBtn}><X size={16} strokeWidth={1.5} /></button>
        </div>
        <div className="flex gap-[11px]">
          <button aria-label="Undo" className="flex size-[35px] items-center justify-center rounded-md bg-[#fdfdfd]"><Undo2 size={14} strokeWidth={1.8} /></button>
          <div className="flex h-[35px] items-center rounded-md bg-[#fdfdfd]">
            <button aria-label="Select" className={toolBtn}><MousePointer2 size={15} strokeWidth={1.6} className="rotate-12" /></button>
            <button aria-label="Ink" className={toolBtn}>
              <span className="flex size-7 items-center justify-center rounded border border-[#b5b5b5] bg-[#efefef]">
                <svg viewBox="0 0 16 16" className="size-4"><path d="M2 12L9 2q2-2 4 0t0 4L5 12z" fill="#111" /><path d="M2 13q5 2 6-1t2 1 4 0" fill="none" stroke="#111" strokeWidth="1.300" /></svg>
              </span>
            </button>
            <button aria-label="Sticky note" className={toolBtn}>
              <svg viewBox="0 0 16 16" className="size-4"><path d="M2 0h12q2 0 2 2v8l-6 6H2q-2 0-2-2V2q0-2 2-2z" fill="#fdbb3f" /><path d="M10 16v-4q0-2 2-2h4z" fill="#f28c1e" /></svg>
            </button>
            <button aria-label="Reactions" className={toolBtn}>
              <svg viewBox="0 0 18 16" className="h-4 w-[18px]"><path d="M9 16C3 11 0 8 0 4.500 0 0 7-2 9 3c2-5 9-3 9 1.500C18 8 15 11 9 16z" fill="#fb6a32" /></svg>
            </button>
            <button aria-label="Text" className={toolBtn}>
              <svg viewBox="0 0 14 14" className="size-3.5" fill="none" stroke="currentColor" strokeWidth="1.300"><path d="M2 4V1h10v3M7 1v12M4.500 13h5" /></svg>
            </button>
            <button aria-label="Shapes" className={toolBtn}>
              <svg viewBox="0 0 16 16" className="size-[15px]" fill="none" stroke="currentColor" strokeWidth="1.300"><path d="M4.500 9.500A4.500 4.500 0 1 1 10 4" /><rect x="6" y="6" width="9" height="9" rx="1.500" /></svg>
            </button>
            <button aria-label="Templates" className={toolBtn}>
              <svg viewBox="0 0 16 16" className="size-[15px]" fill="none" stroke="currentColor" strokeWidth="1.300"><rect x="2" y="1.500" width="12.500" height="13" rx="2" /><path d="M5.500 1.500v13M5.500 5.500h9M9.500 5.500V1.500" /></svg>
            </button>
            <button aria-label="More" className={toolBtn}><Ellipsis size={16} /></button>
          </div>
        </div>
      </div>
      <div className="absolute right-px bottom-px flex h-[35px] w-[172px] items-center justify-between rounded-md bg-[#fdfdfd] pr-[15px] pl-[9px] text-xs text-[#333]">
        <button aria-label="Zoom out"><ZoomOut size={15} strokeWidth={1.5} /></button>
        <span className="pl-1.5">100%</span>
        <div className="flex gap-5">
          <button aria-label="Zoom in"><ZoomIn size={15} strokeWidth={1.5} /></button>
          <button aria-label="Fit to screen">
            <svg viewBox="0 0 16 16" className="size-[15px]" fill="none" stroke="currentColor" strokeWidth="1.300"><rect x="1" y="2.500" width="14" height="11" rx="1.500" /><path d="M4 8h3M12 8H9M5.500 6.500L4 8l1.500 1.500M10.500 6.500L12 8l-1.500 1.500" /></svg>
          </button>
        </div>
      </div>
    </>
  );
}

function Whiteboard() {
  return (
    <div className="relative flex min-h-0 flex-1 flex-col overflow-hidden bg-[#1e1e1f] font-['Open_Sans',sans-serif]">
      <div className="flex h-[27px] shrink-0 items-center bg-[#1d1d1d] pl-[7px] font-['Roboto',sans-serif] text-[11px] text-[#dcdcdc]">
        Microsoft Whiteboard
        <div className="ml-auto flex items-center pr-2">
          <span className="flex w-[41px] justify-center"><Minus size={12} /></span>
          <span className="flex w-[41px] justify-center"><Restore size={11} className="-scale-x-100 rotate-180" /></span>
          <span className="flex w-[26px] justify-end"><X size={12} /></span>
        </div>
      </div>
      <div className="flex h-9 shrink-0 items-center border-y border-[#a5a5a5] bg-[#fdfcfe] pt-px text-[#242424]">
        <button aria-label="Home" className="ml-1">
          <svg viewBox="0 0 16 16" className="size-[15px]" fill="none" stroke="currentColor" strokeWidth="1.200" strokeLinejoin="round"><path d="M2 6.500L8 1l6 5.500V14q0 1-1 1h-2V10q0-3-3-3t-3 3v5H3q-1 0-1-1z" /></svg>
        </button>
        <span className="ml-[13px] h-4 w-px bg-[#ddd]" />
        <button className="ml-[9px] flex items-center gap-1.5 text-xs font-semibold">Untitled whiteboard<ChevronDown size={13} strokeWidth={1.5} /></button>
        <button aria-label="Timer" className="ml-auto"><Timer size={16} strokeWidth={1.5} /></button>
        <span className="ml-3.5 h-4 w-px bg-[#ccc]" />
        <button className="ml-3 flex h-[25px] w-[89px] items-center justify-center gap-2.5 rounded border border-[#a0a0a0] text-xs text-[#444]">
          <svg viewBox="0 0 16 16" className="size-3.5" fill="none" stroke="currentColor" strokeWidth="1.300"><path d="M7 2H3.500Q2 2 2 3.500v9Q2 14 3.500 14h9q1.500 0 1.500-1.500V10M5 10q0-5 6-5V2l4 4-4 4V7.500Q7 7.500 5 10z" /></svg>
          Share
        </button>
        <button aria-label="Settings" className="ml-3.5 pr-[3px]"><Settings size={15} strokeWidth={1.5} /></button>
      </div>
      <div className="relative min-h-0 flex-1 bg-[linear-gradient(to_right,rgba(255,255,255,0.035)_1px,transparent_1px),linear-gradient(to_bottom,rgba(255,255,255,0.035)_1px,transparent_1px)] bg-[size:28px_28px] bg-[position:0_22px]">
        <Drawing />
        <BoardToolbars />
      </div>
    </div>
  );
}

/* ---------- meeting area ---------- */

function Meeting() {
  return (
    <main className="relative flex min-w-0 flex-1 flex-col bg-[#06172a] pl-px text-white">
      <svg viewBox="0 0 14 8" className="absolute top-1 left-[361px] h-2 w-3.5"><path d="M0 0h14L7 8z" fill="red" /></svg>
      <header className="h-[105px] shrink-0">
        <div className="flex h-[59px] items-center pt-1">
          <button aria-label="Toggle user list" className="w-[58px] pl-[17px]">
            <svg viewBox="0 0 24 18" className="h-[18px] w-6" fill="none" stroke="currentColor" strokeWidth="1.800"><path d="M5 5L1.500 9 5 13" /><circle cx="15" cy="6" r="4.500" /><path d="M7.500 16.500c0-6 15-6 15 0z" /></svg>
          </button>
          <h1 className="min-w-0 flex-1 text-center text-sm">CSE310-Practical by : 64359:Michael ( KS005CSE31023242-G1 )</h1>
          <div className="flex w-[106px] items-center justify-end pr-[21px]">
            <button aria-label="Connection status" className="flex size-[34px] items-center justify-center rounded-full bg-[#00807f]">
              <svg viewBox="0 0 16 16" className="size-4" fill="#fff"><path d="M0 12h3v4H0zM4.300 8h3v8h-3zM8.600 4h3v12h-3zM13 0h3v16h-3z" /></svg>
            </button>
            <button aria-label="Options" className="ml-[18px]"><EllipsisVertical size={20} strokeWidth={3} /></button>
          </div>
        </div>
        <div className="ml-4 flex h-6 w-[94px] items-center gap-1.5 rounded-full bg-[#0277bd] pl-1.5 text-sm leading-none font-bold">
          <span className="flex size-4 items-center justify-center rounded-full bg-[#00807f]"><Mic size={14} /></span>
          <span className="pb-0.5">Michael</span>
        </div>
      </header>
      <Whiteboard />
      <button aria-label="Fullscreen" className="absolute top-[94px] right-0 flex h-7 w-[27px] items-center justify-center bg-black/50">
        <svg viewBox="0 0 18 18" className="size-[17px]" fill="#fff" stroke="#fff" strokeWidth="1.200"><path d="M1 1h5L1 6zM17 1v5l-5-5zM1 17v-5l5 5zM17 17h-5l5-5z" /><path d="M3 3l4 4M15 3l-4 4M3 15l4-4M15 15l-4-4" strokeWidth="2" /></svg>
      </button>
      <footer className="flex h-[81px] shrink-0 items-center pt-2.5 pr-6 pl-[13px]">
        <div className="flex flex-1 justify-center gap-6">
          <button aria-label="Leave audio" className="flex size-[46px] items-center justify-center rounded-full bg-[#0f70d7]">
            <svg viewBox="0 0 22 20" className="h-[18px] w-5" fill="none" stroke="#fff" strokeWidth="1.800"><path d="M3 11V9a8 8 0 0 1 16 0v2" /><path d="M6 10v8c-3 0-5-1-5-4s2-4 5-4zM16 10v8c3 0 5-1 5-4s-2-4-5-4z" /></svg>
          </button>
          <button aria-label="Share webcam" className="flex size-[46px] items-center justify-center rounded-full border-[3px] border-[#a9b0b8] text-[#a9b0b8]">
            <svg viewBox="0 0 22 18" className="h-[18px] w-[22px]" fill="none" stroke="currentColor" strokeWidth="1.600"><path d="M1 3h13v12H1zM14 7.500l6-4v11l-6-4M18 0L3 18" /></svg>
          </button>
        </div>
        <button aria-label="Raise hand" className="flex size-[46px] items-center justify-center rounded-full border-[3px] border-white"><Hand size={21} strokeWidth={2} fill="#b9c0c8" /></button>
      </footer>
      <div className="absolute top-[386px] right-0 h-[49px] w-[130px] bg-black pt-px pl-1 font-['Noto_Sans',sans-serif] text-base leading-[23px] text-[#e4e9f0]">
        <div className="flex items-center gap-[5px]">
          <svg viewBox="0 0 8 13" className="h-[13px] w-2" fill="none" stroke="#6fe08a" strokeWidth="1.800"><path d="M4 0v11M1 8l3 3.500L7 8" /></svg>38.1 KBps
        </div>
        <div className="flex items-center gap-[5px]">
          <svg viewBox="0 0 8 13" className="h-[13px] w-2" fill="none" stroke="#ff4a12" strokeWidth="1.800"><path d="M4 13V2M1 5l3-3.500L7 5" /></svg>1.2 KBps
        </div>
      </div>
    </main>
  );
}

/* ---------- taskbar ---------- */

function TaskIcon({ label, active, dot, children }: { label: string; active?: boolean; dot?: boolean; children: React.ReactNode }) {
  return (
    <button aria-label={label} className={`relative mx-[3px] flex h-[50px] w-[49px] items-center justify-center rounded-md ${active ? "bg-white/10" : ""}`}>
      {children}
      {active && <span className="absolute bottom-0.5 h-1 w-5 rounded-full bg-[#4cc2ff]" />}
      {dot && <span className="absolute bottom-0.5 h-1 w-2 rounded-full bg-[#9a9ca5]" />}
    </button>
  );
}

function Taskbar() {
  return (
    <nav className="grid h-[60px] shrink-0 grid-cols-[1fr_auto_1fr] items-center border-t border-[#3c404c] bg-[linear-gradient(to_right,#1c1d2e_0%,#161c3c_22%,#14205e_29%,#161f4c_38%,#14205e_48%,#1b1f42_57%,#13205c_63%,#13205a_70%,#1b2033_78%,#1c2230_100%)] text-white">
      <div />
      <div className="flex items-center">
        <button aria-label="Start" className="mr-[5px] flex w-[54px] justify-center">
          <span className="grid size-7 grid-cols-2 gap-0.5">
            <span className="bg-[#7fdcfb]" /><span className="bg-[#5accf8]" /><span className="bg-[#3fb8f5]" /><span className="bg-[#1ba1ef]" />
          </span>
        </button>
        <label className="mr-0.5 flex h-10 w-[275px] items-center gap-3 rounded-full border border-white/15 bg-white/15 pl-3">
          <Search size={20} strokeWidth={1.8} />
          <input aria-label="Search" placeholder="Search" className="w-40 bg-transparent text-base outline-none placeholder:text-[#c8cce0]" />
        </label>
        <TaskIcon label="Copilot">
          <svg viewBox="0 0 30 30" className="size-[30px]">
            <path d="M9 2h9q3 0 4 4l2 5H13l-5 13H5q-5 0-4-5L5 6q1-4 4-4z" fill="#2a9df0" />
            <path d="M9 2h4L8 24H5q-5 0-4-5L5 6q1-4 4-4z" fill="#2fc0a0" />
            <path d="M18 9h8q5 0 4 5l-3 10q-1 4-4 4h-9q4-3 4-10z" fill="#d265e0" />
            <rect x="7" y="20" width="22" height="10" rx="2" fill="#fdc022" />
            <text x="18" y="28.500" textAnchor="middle" fontSize="9" fontWeight="700" fill="#111" fontFamily="Open Sans">PRE</text>
          </svg>
        </TaskIcon>
        <TaskIcon label="Task view">
          <svg viewBox="0 0 28 28" className="size-7"><rect x="8" y="1" width="20" height="19" fill="#f3f3f3" /><rect x="0" y="9" width="19" height="18" fill="#55565e" /><path d="M8 9h11v11H8z" fill="#a9a9ac" /></svg>
        </TaskIcon>
        <TaskIcon label="Visual Studio Code"><BiLogoVisualStudio size={34} color="#2391e0" /></TaskIcon>
        <TaskIcon label="Brave" active><BraveLogo size={30} /></TaskIcon>
        <TaskIcon label="Telegram"><span className="flex size-7 items-center justify-center rounded-full bg-[#2c9fdb]"><FaTelegramPlane size={17} /></span></TaskIcon>
        <TaskIcon label="LightShot"><span className="flex size-[30px] items-center justify-center bg-[#22a7d8] text-2xl leading-none font-semibold">L</span></TaskIcon>
        <TaskIcon label="Spotify"><span className="rounded-full bg-black"><FaSpotify size={28} color="#1ed760" /></span></TaskIcon>
        <TaskIcon label="Google Calendar">
          <svg viewBox="0 0 24 24" className="size-6"><rect width="24" height="24" rx="2" fill="#1a73e8" /><path d="M19 5h5v14h-5z" fill="#fbbc04" /><path d="M0 19h24l-5 5H2q-2 0-2-2z" fill="#34a853" /><path d="M19 19h5l-5 5z" fill="#ea4335" /><path d="M5 5h14v14H5z" fill="#fff" /><text x="12" y="16" textAnchor="middle" fontSize="10" fontWeight="700" fill="#1a73e8" fontFamily="Open Sans">31</text></svg>
        </TaskIcon>
        <TaskIcon label="Opera"><SiOpera size={28} color="#e5142b" /></TaskIcon>
        <TaskIcon label="Clock">
          <svg viewBox="0 0 30 30" className="size-[30px]"><path d="M0 14h30v14q0 2-2 2H2q-2 0-2-2z" fill="#6a7076" /><circle cx="15" cy="14" r="13" fill="#ececec" stroke="#555b61" strokeWidth="2" /><path d="M9 7l6 8 6-8" stroke="#222" strokeWidth="2.500" fill="none" /><path d="M15 14v9" stroke="#e8590c" strokeWidth="2.500" /></svg>
        </TaskIcon>
        <TaskIcon label="File Explorer" dot>
          <svg viewBox="0 0 30 26" className="h-[26px] w-[30px]"><path d="M0 2q0-2 2-2h8l3 3h15q2 0 2 2v18H0z" fill="#e8a21a" /><path d="M0 6h30v18q0 2-2 2H2q-2 0-2-2z" fill="#ffd766" /><path d="M6 26v-6q0-2 2-2h14q2 0 2 2v6z" fill="#1479c9" /></svg>
        </TaskIcon>
      </div>
      <div className="flex items-center justify-end pr-[26px]">
        <button aria-label="Hidden icons" className="mr-6"><ChevronUp size={19} /></button>
        <button className="mr-[21px] text-center text-[15px] leading-5">ENG<br />IN</button>
        <button aria-label="Network, volume, battery" className="mr-5 flex gap-2.5">
          <Wifi size={20} strokeWidth={1.8} /><Volume2 size={20} strokeWidth={1.5} />
          <svg viewBox="0 0 20 20" className="size-5" fill="none" stroke="#fff" strokeWidth="1.500"><path d="M8 5h7q1.500 0 1.500 1.500v8Q16.500 16 15 16H4q-1.500 0-1.500-1.500V12M18.500 9v3" /><path d="M7 14l5-5h2.500v5z" fill="#fff" stroke="none" /><path d="M5 1L1.500 7H4l-1 5 4-6.500H4.500z" fill="#fff" stroke="none" /></svg>
        </button>
        <button className="mr-2.5 text-right text-[15px] leading-5">7:05 PM<br />1/24/2024</button>
        <button aria-label="Notifications"><Bell size={19} fill="#8fe3ff" color="#8fe3ff" /></button>
      </div>
    </nav>
  );
}

export default function App() {
  return (
    <div className="flex h-screen flex-col overflow-hidden font-['Open_Sans',sans-serif]">
      <TabStrip />
      <AddressRow />
      <BookmarksBar />
      <div className="flex min-h-0 flex-1 font-['Noto_Sans_CJK_SC',sans-serif]">
        <Sidebar />
        <Chat />
        <Meeting />
      </div>
      <Taskbar />
    </div>
  );
}
